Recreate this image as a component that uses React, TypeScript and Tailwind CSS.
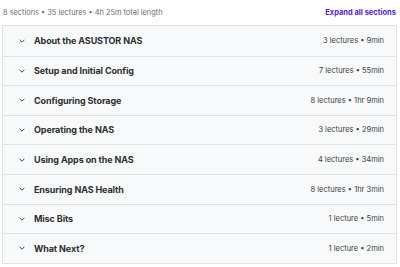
import React from 'react';

const sections = [
  { title: 'About the ASUSTOR NAS', meta: '3 lectures • 9min' },
  { title: 'Setup and Initial Config', meta: '7 lectures • 55min' },
  { title: 'Configuring Storage', meta: '8 lectures • 1hr 9min' },
  { title: 'Operating the NAS', meta: '3 lectures • 29min' },
  { title: 'Using Apps on the NAS', meta: '4 lectures • 34min' },
  { title: 'Ensuring NAS Health', meta: '8 lectures • 1hr 3min' },
  { title: 'Misc Bits', meta: '1 lecture • 5min' },
  { title: 'What Next?', meta: '1 lecture • 2min' },
];

const Chevron = () => (
  <svg width="6" height="4" viewBox="0 0 10 6" fill="none" className="text-[#2d2f31]">
    <path d="M1 1l4 4 4-4" stroke="currentColor" strokeWidth="1.5" />
  </svg>
);

export default function App() {
  return (
    <div className="w-[400px] h-[267px] bg-white font-['Inter',sans-serif] text-[#2d2f31] overflow-hidden">
      <div className="flex items-center justify-between pl-[3px] pr-[4px] h-[25px]">
        <span className="text-[7.4px] text-[#6a6f73]">8 sections • 35 lectures • 4h 25m total length</span>
        <span className="text-[7.5px] font-bold text-[#5624d0]">Expand all sections</span>
      </div>
      <div className="ml-[2px] mr-[3px] border border-[#dfe3e6]">
        {sections.map((s, i) => (
          <div
            key={s.title}
            className={`flex items-center justify-between h-[29.6px] bg-[#f7f9fa] pl-[16px] pr-[12px] ${i > 0 ? 'border-t border-[#dfe3e6]' : ''}`}
          >
            <div className="flex items-center gap-[9px]">
              <Chevron />
              <span className="text-[9px] font-bold tracking-[-0.1px]">{s.title}</span>
            </div>
            <span className="text-[7.5px] text-[#3e4143]">{s.meta}</span>
          </div>
        ))}
      </div>
    </div>
  );
}
